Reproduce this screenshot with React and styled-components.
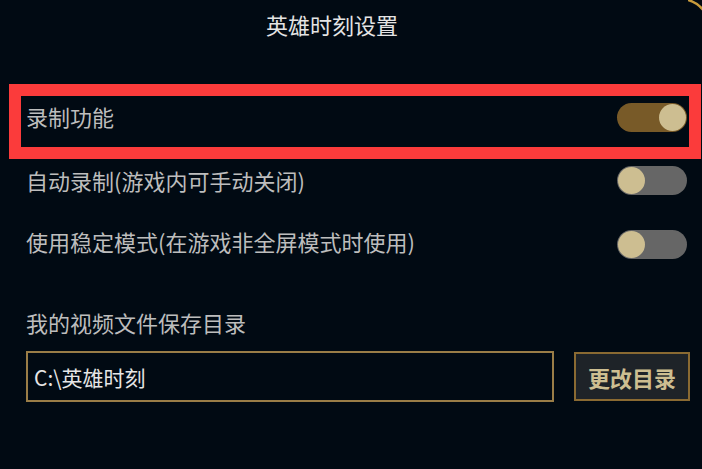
import React, { useState } from "react";
import styled, { createGlobalStyle } from "styled-components";

const GlobalStyle = createGlobalStyle`
  html, body { margin: 0; padding: 0; background: #010a13; }
  body { font-family: "Noto Sans CJK SC", "Noto Sans", sans-serif; }
  * { box-sizing: border-box; }
`;

const Panel = styled.div`
  position: relative;
  width: 702px;
  height: 469px;
  background: #010a13;
  overflow: hidden;
  display: flex;
  flex-direction: column;
`;

const CornerArc = styled.svg`
  position: absolute;
  top: 0;
  right: 0;
`;

const Header = styled.div`
  height: 86px;
  display: flex;
  justify-content: center;
  padding: 9px 38px 0 0;
  align-items: flex-start;
`;

const Title = styled.h1`
  margin: 0;
  font-size: 22px;
  line-height: 30px;
  font-weight: 400;
  color: #e4e4e4;
  letter-spacing: 0;
`;

const Row = styled.div`
  position: relative;
  height: 62px;
  display: flex;
  align-items: center;
  justify-content: space-between;
  padding: 0 15px 0 26px;
  ${(p) =>
    p.$highlighted &&
    `
    &::after {
      content: "";
      position: absolute;
      top: -2px;
      left: 9px;
      right: 1px;
      bottom: -11px;
      border: 12px solid #fb3b3b;
      pointer-events: none;
    }
  `}
`;

const Label = styled.span`
  font-size: 22px;
  line-height: 30px;
  color: #bdbdbd;
  margin-top: ${(p) => p.$shift || 0}px;
`;

const Track = styled.button`
  position: relative;
  width: 70px;
  height: 29px;
  border: none;
  padding: 0;
  border-radius: 15px;
  cursor: pointer;
  background: ${(p) => (p.$on ? "#785a28" : "#666666")};
  margin-top: ${(p) => p.$shift || 0}px;
`;

const Knob = styled.span`
  position: absolute;
  top: 1px;
  left: ${(p) => (p.$on ? "42px" : "1px")};
  width: 27px;
  height: 27px;
  border-radius: 50%;
  background: #cdbe91;
`;

const DirSection = styled.div`
  display: flex;
  flex-direction: column;
  padding: 35px 12px 0 26px;
  gap: 14px;
`;

const DirRow = styled.div`
  display: flex;
  align-items: center;
  gap: 20px;
`;

const PathBox = styled.div`
  width: 528px;
  height: 51px;
  border: 2px solid #9a7d47;
  background: #010a13;
  display: flex;
  align-items: center;
  padding-left: 6px;
  font-size: 21px;
  color: #e6e6e6;
`;

const ChangeButton = styled.button`
  width: 116px;
  height: 49px;
  border: 2px solid #8a6a32;
  background: #1e2328;
  color: #cdbe91;
  font-family: "Noto Sans CJK SC", sans-serif;
  font-size: 22px;
  font-weight: 700;
  padding: 0;
  cursor: pointer;
`;

function Toggle({ on, onClick, shift }) {
  return (
    <Track $on={on} $shift={shift} onClick={onClick}>
      <Knob $on={on} />
    </Track>
  );
}

export default function App() {
  const [rec, setRec] = useState(true);
  const [auto, setAuto] = useState(false);
  const [stable, setStable] = useState(false);
  return (
    <>
      <GlobalStyle />
      <Panel>
        <CornerArc width="14" height="12" viewBox="0 0 14 12">
          <path d="M 0 0 A 30 30 0 0 1 16 11" fill="none" stroke="#c89b3c" strokeWidth="2.5" />
        </CornerArc>
        <Header>
          <Title>英雄时刻设置</Title>
        </Header>
        <Row $highlighted>
          <Label $shift={-2}>录制功能</Label>
          <Toggle on={rec} onClick={() => setRec(!rec)} />
        </Row>
        <Row>
          <Label $shift={2}>自动录制(游戏内可手动关闭)</Label>
          <Toggle on={auto} onClick={() => setAuto(!auto)} shift={2} />
        </Row>
        <Row>
          <Label>使用稳定模式(在游戏非全屏模式时使用)</Label>
          <Toggle on={stable} onClick={() => setStable(!stable)} shift={6} />
        </Row>
        <DirSection>
          <Label>我的视频文件保存目录</Label>
          <DirRow>
            <PathBox>C:\英雄时刻</PathBox>
            <ChangeButton>更改目录</ChangeButton>
          </DirRow>
        </DirSection>
      </Panel>
    </>
  );
}
